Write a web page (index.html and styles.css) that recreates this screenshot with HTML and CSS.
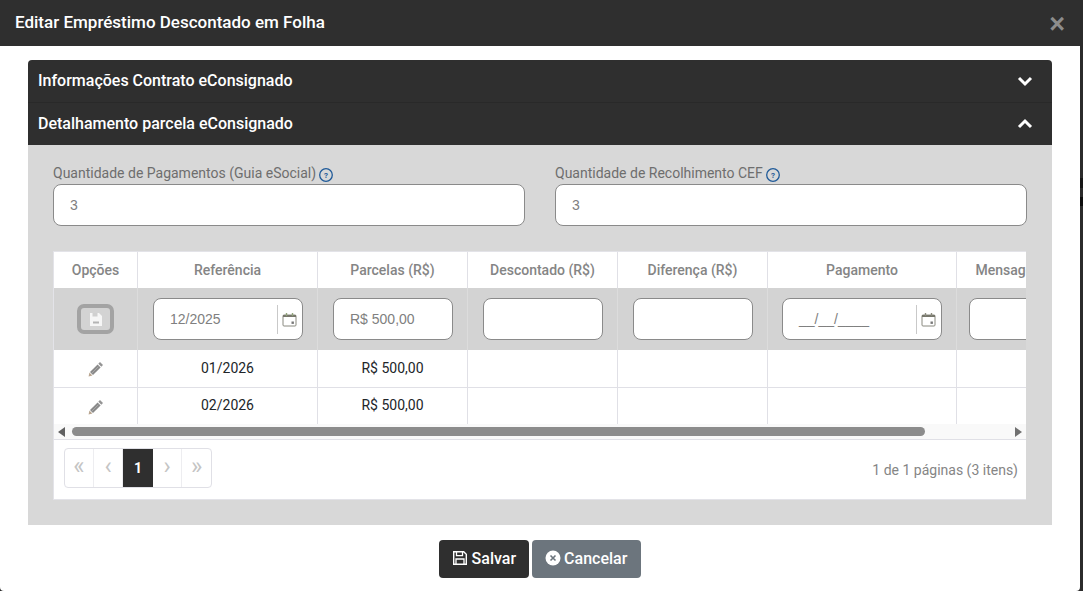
FILE: index.html
```html
<!DOCTYPE html>
<html lang="pt-BR">
<head>
<meta charset="utf-8">
<title>Editar Empréstimo Descontado em Folha</title>
<link rel="stylesheet" href="styles.css">
</head>
<body>
<div class="modal">
  <header class="modal-head">
    <h1>Editar Empréstimo Descontado em Folha</h1>
    <span class="close">×</span>
  </header>
  <main class="modal-body">
    <section class="accordion">
      <div class="acc-head acc-first">
        <span>Informações Contrato eConsignado</span>
        <svg class="chev" viewBox="0 0 16 12" width="16" height="12"><path d="M2 3l6 6 6-6" fill="none" stroke="#fff" stroke-width="3"/></svg>
      </div>
      <div class="acc-head">
        <span>Detalhamento parcela eConsignado</span>
        <svg class="chev" viewBox="0 0 16 12" width="16" height="12"><path d="M2 9l6-6 6 6" fill="none" stroke="#fff" stroke-width="3"/></svg>
      </div>
      <div class="acc-content">
        <div class="fields">
          <div class="field">
            <label>Quantidade de Pagamentos (Guia eSocial)<svg class="help" viewBox="0 0 14 14" width="14" height="14"><circle cx="7" cy="7" r="6.300" fill="none" stroke="#1f5a99" stroke-width="1.300"/><text x="7" y="10" text-anchor="middle" class="help-q">?</text></svg></label>
            <div class="input input-big">3</div>
          </div>
          <div class="field">
            <label>Quantidade de Recolhimento CEF<svg class="help" viewBox="0 0 14 14" width="14" height="14"><circle cx="7" cy="7" r="6.300" fill="none" stroke="#1f5a99" stroke-width="1.300"/><text x="7" y="10" text-anchor="middle" class="help-q">?</text></svg></label>
            <div class="input input-big">3</div>
          </div>
        </div>
        <div class="grid-box">
          <div class="grid-clip">
            <table class="grid">
              <colgroup>
                <col class="c1"><col class="c2"><col class="c3"><col class="c3"><col class="c3"><col class="c6"><col class="c7">
              </colgroup>
              <thead>
                <tr>
                  <th>Opções</th><th>Referência</th><th>Parcelas (R$)</th><th>Descontado (R$)</th><th>Diferença (R$)</th><th>Pagamento</th><th>Mensagem</th>
                </tr>
              </thead>
              <tbody>
                <tr class="edit-row">
                  <td><span class="save-mini"><svg viewBox="0 0 12 13" width="12" height="13"><path d="M0 0h9l3 3v10H0z" fill="#f6f6f6"/><rect x="2.500" y="0" width="5" height="3.500" fill="#d0d0d0"/><rect x="3" y="8.500" width="6" height="2" fill="#b4b4b4"/></svg></span></td>
                  <td><div class="input cell-input cell-date"><span>12/2025</span><i class="sep"></i><svg class="cal" viewBox="0 0 15 15" width="15" height="15"><rect x="1" y="3" width="13" height="11" rx="1" fill="none" stroke="#8a8a80" stroke-width="1"/><rect x="1" y="3" width="13" height="2" fill="#77776c"/><path d="M4.500 1v3M10.500 1v3" stroke="#8fa27a" stroke-width="1.400"/><rect x="9.500" y="9.500" width="2.400" height="2.400" fill="#777"/></svg></div></td>
                  <td><div class="input cell-input">R$ 500,00</div></td>
                  <td><div class="input cell-input"></div></td>
                  <td><div class="input cell-input"></div></td>
                  <td class="pay"><div class="input cell-input cell-date"><span>__/__/____</span><i class="sep"></i><svg class="cal" viewBox="0 0 15 15" width="15" height="15"><rect x="1" y="3" width="13" height="11" rx="1" fill="none" stroke="#8a8a80" stroke-width="1"/><rect x="1" y="3" width="13" height="2" fill="#77776c"/><path d="M4.500 1v3M10.500 1v3" stroke="#8a8a7c" stroke-width="1.400"/><rect x="9.500" y="9.500" width="2.400" height="2.400" fill="#777"/></svg></div></td>
                  <td><div class="input cell-input cell-msg"></div></td>
                </tr>
                <tr>
                  <td><svg class="pencil" viewBox="0 0 16 16" width="16" height="16"><path d="M12 1l3 3-1.700 1.700-3-3z" fill="#949494"/><path d="M9.600 3.400l3 3-7.600 7.600-3-3z" fill="#8a8a8a"/><path d="M3.500 12.500l6.800-6.800" stroke="#b0b0b0" stroke-width=".8"/><path d="M1.400 11.600l3 3-3.800.8z" fill="#b8a48e"/></svg></td>
                  <td>01/2026</td><td>R$ 500,00</td><td></td><td></td><td></td><td></td>
                </tr>
                <tr class="last">
                  <td><svg class="pencil" viewBox="0 0 16 16" width="16" height="16"><path d="M12 1l3 3-1.700 1.700-3-3z" fill="#949494"/><path d="M9.600 3.400l3 3-7.600 7.600-3-3z" fill="#8a8a8a"/><path d="M3.500 12.500l6.800-6.800" stroke="#b0b0b0" stroke-width=".8"/><path d="M1.400 11.600l3 3-3.800.8z" fill="#b8a48e"/></svg></td>
                  <td>02/2026</td><td>R$ 500,00</td><td></td><td></td><td></td><td></td>
                </tr>
              </tbody>
            </table>
          </div>
          <div class="hscroll">
            <svg viewBox="0 0 8 10" width="8" height="10"><path d="M7 0v10L0 5z" fill="#606060"/></svg>
            <div class="track"><div class="thumb"></div></div>
            <svg viewBox="0 0 8 10" width="8" height="10"><path d="M1 0v10l7-5z" fill="#707070"/></svg>
          </div>
          <div class="pager-row">
            <div class="pager">
              <span class="pg">«</span><span class="pg">‹</span><span class="pg pg-on">1</span><span class="pg">›</span><span class="pg">»</span>
            </div>
            <span class="pg-info">1 de 1 páginas (3 itens)</span>
          </div>
        </div>
      </div>
    </section>
    <footer class="actions">
      <button class="btn btn-dark"><svg viewBox="0 0 16 16" width="16" height="16"><path d="M1.700 1.700h10l2.600 2.600v10H1.700z" fill="none" stroke="#fff" stroke-width="1.400"/><path d="M4.500 2v3.600h6V2" fill="none" stroke="#fff" stroke-width="1.300"/><path d="M4 14V9h8v5" fill="none" stroke="#fff" stroke-width="1.300"/></svg>Salvar</button>
      <button class="btn btn-gray"><svg viewBox="0 0 16 16" width="16" height="16"><circle cx="8" cy="8" r="7.500" fill="#fff"/><path d="M5.500 5.500l5 5M10.500 5.500l-5 5" stroke="#6c757d" stroke-width="1.600"/></svg>Cancelar</button>
    </footer>
  </main>
</div>
</body>
</html>
```
FILE: styles.css
```css
* { box-sizing: border-box; }
html, body { margin: 0; height: 100%; overflow: hidden; }
html { background: linear-gradient(#2b2b2b 178px, #161616 178px, #161616 188px, #2b2b2b 188px, #2b2b2b 197px, #0d0d0d 197px, #0d0d0d 206px, #2b2b2b 206px); }
body { font-family: Roboto, "Liberation Sans", sans-serif; font-size: 14px; color: #212529; }
.modal { width: 1080px; height: 591px; background: #fff; display: flex; flex-direction: column; border-radius: 0 0 4px 4px; overflow: hidden; }
.modal-head { height: 46px; background: #2f2f2f; display: flex; align-items: center; justify-content: space-between; padding: 0 15px 0 15px; flex: none; }
.modal-head h1 { margin: 0 0 2px; font-size: 17px; font-weight: 500; color: #fff; line-height: 20px; }
.close { color: #8c8c8c; font-family: "Liberation Sans", sans-serif; font-size: 27px; font-weight: 700; line-height: 22px; position: relative; top: 1px; }
.modal-body { padding: 14px 28px 0; flex: 1; }
.accordion { border-radius: 4px 4px 0 0; overflow: hidden; }
.acc-head { height: 42px; background: #2f2f2f; color: #fff; display: flex; align-items: center; justify-content: space-between; padding: 0 19px 0 10px; font-size: 16px; font-weight: 500; }
.acc-head span { padding-bottom: 2px; }
.acc-first { height: 43px; border-bottom: 1px solid #292929; }
.acc-content { height: 380px; background: #d8d8d8; padding: 19px 25px 0; }
.fields { display: flex; gap: 30px; }
.field { flex: 1; }
.field label { display: flex; align-items: center; gap: 3px; height: 20px; padding-bottom: 2px; color: #6e6e6e; font-size: 14px; line-height: 18px; }
.help { flex: none; margin-top: 3px; }
.help-q { font: 700 8px Roboto, sans-serif; fill: #1f5a99; }
.input { background: #fff; border: 1px solid #8a8a8a; border-radius: 8px; color: #808080; font-family: "Liberation Sans", sans-serif; font-size: 14px; display: flex; align-items: center; }
.input-big { height: 42px; padding: 0 16px; }
.grid-box { margin: 25px 1px 0 0; height: 249px; background: #fff; border: 1px solid #e3e3e8; border-width: 1px 0 1px 1px; display: flex; flex-direction: column; }
.grid-clip { height: 172px; overflow: hidden; flex: none; }
.grid { width: 1011px; table-layout: fixed; border-collapse: separate; border-spacing: 0; }
.c1 { width: 84px; } .c2 { width: 180px; } .c3 { width: 150px; } .c6 { width: 189px; } .c7 { width: 108px; }
.grid th { height: 36px; font-size: 14px; font-weight: 500; color: #858585; text-align: center; background: #fff; border-right: 1px solid #e0e0e6; padding: 0; white-space: nowrap; }
.grid td { height: 38px; text-align: center; font-size: 14px; color: #212529; border-right: 1px solid #e0e0e6; border-bottom: 1px solid #e0e0e6; padding: 0 0 2px; }
.grid tr.last td { border-bottom: 0; height: 37px; padding: 0 0 3px; }
.grid .edit-row td { background: #d3d3d3; height: 62px; border-bottom: 0; border-right-color: #dcdcdc; padding: 0 14px 0 15px; }
.grid .edit-row td:first-child { padding: 0; }
.grid .edit-row td.pay { padding: 0 14px; }
.grid .edit-row td:last-child { padding: 0 0 0 12px; }
.cell-input { height: 42px; padding: 0 16px; }
.cell-date { padding: 0 5px 0 16px; justify-content: space-between; }
.cell-date span { flex: 1; text-align: left; }
.sep { width: 1px; height: 29px; background: #c9c9c9; margin-right: 4px; }
.cal { flex: none; }
.cell-msg { width: 100px; }
.save-mini { display: inline-flex; align-items: center; justify-content: center; width: 37px; height: 30px; border: 4px solid #a3a3a3; border-radius: 7px; vertical-align: middle; }
.pencil { vertical-align: middle; position: relative; top: 1px; }
.hscroll { height: 15px; flex: none; display: flex; align-items: center; gap: 6px; padding: 0 4px; background: #f9f9f9; }
.track { flex: 1; height: 9px; }
.thumb { width: 853px; height: 9px; border-radius: 5px; background: #8c8c8c; }
.pager-row { flex: 1; display: flex; align-items: center; justify-content: space-between; padding: 0 8px 0 10px; border-top: 1px solid #e0e0e6; }
.pager { display: flex; height: 40px; margin-bottom: 4px; border: 1px solid #e0e0e6; border-radius: 4px; overflow: hidden; }
.pg { width: 29px; display: flex; align-items: center; justify-content: center; color: #c4c4c4; font-size: 24px; padding-bottom: 4px; border-right: 1px solid #ededf0; }
.pg:last-child { border-right: 0; }
.pg-on { background: #2f2f2f; color: #fff; font-size: 14px; font-weight: 700; border-right: 0; width: 30px; padding-bottom: 0; }
.pg-info { color: #858585; font-size: 14px; }
.actions { display: flex; justify-content: center; gap: 3px; padding-top: 15px; }
.btn { height: 38px; border: 0; border-radius: 4px; display: flex; align-items: center; gap: 4px; padding: 0 13px 2px; color: #fff; font: 500 16px Roboto, sans-serif; }
.btn-dark { background: #2f2f2f; }
.btn-gray { background: #6c757d; gap: 3px; padding-right: 14px; }
```
